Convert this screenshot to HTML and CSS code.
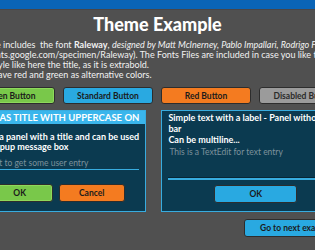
FILE: index.html
```html
<!DOCTYPE html>
<html lang="en">
<head>
    <meta charset="UTF-8">
    <meta name="viewport" content="width=device-width, initial-scale=1.0">
    <title>Theme Example</title>
    <link rel="stylesheet" href="styles.css">
</head>
<body>
    <div class="topbar"></div>

    <main class="page">
        <h1 class="title">Theme Example</h1>

        <!-- Texto de introduccion -->
        <p class="intro">
            This theme includes &nbsp;the font <b>Raleway</b>, <i>designed by Matt McInerney, Pablo Impallari, Rodrigo Fuenzalida</i><br>
            (https://fonts.google.com/specimen/Raleway). The Fonts Files are included in case you like to change<br>
            the font style like here the title, as it is extrabold.<br>
            We also&nbsp; have red and green as alternative colors.
        </p>

        <!-- Botones de ejemplo -->
        <div class="button-row">
            <button class="btn btn-green">Green Button</button>
            <button class="btn btn-blue">Standard Button</button>
            <button class="btn btn-red">Red Button</button>
            <button class="btn btn-disabled" disabled>Disabled Button</button>
        </div>

        <div class="panels">
            <!-- Panel con titulo -->
            <section class="panel">
                <header class="panel-title">Panel as title with uppercase on</header>
                <div class="panel-body">
                    <p class="panel-text">This is a panel with a title and can be used<br>as a popup message box</p>
                    <div class="text-input">TextEdit to get some user entry</div>
                    <div class="dialog-buttons">
                        <button class="btn btn-green">OK</button>
                        <button class="btn btn-red">Cancel</button>
                    </div>
                </div>
            </section>

            <!-- Panel sin titulo -->
            <section class="panel">
                <div class="panel-body">
                    <p class="panel-text loose">Simple text with a label - Panel without title<br>bar<br>Can be multiline...</p>
                    <div class="text-area">This is a TextEdit for text entry</div>
                    <div class="dialog-buttons low">
                        <button class="btn btn-blue wide">OK</button>
                    </div>
                </div>
            </section>
        </div>

        <div class="footer-row">
            <button class="btn btn-blue next">Go to next example</button>
        </div>
    </main>
</body>
</html>
```

FILE: styles.css
```css
/* General */
body {
    margin: 0;
    background: #505050;
    font-family: Lato, 'Open Sans', sans-serif;
    color: #ffffff;
    overflow: hidden;
}

.topbar {
    height: 9px;
    background: #0a64b6;
    border-bottom: 1px solid #4a4646;
}

/* Contenedor centrado, mas ancho que la ventana */
.page {
    width: 385px;
    margin-left: -35px;
}

.title {
    margin: 3px 0 0;
    font-size: 18px;
    line-height: 22px;
    font-weight: 900;
    text-align: center;
}

.intro {
    margin: 5px 0 0 -8px;
    font-size: 9px;
    line-height: 10px;
    white-space: nowrap;
    color: #f2f2f2;
}

/* Botones */
.btn {
    font-family: Lato, 'Open Sans', sans-serif;
    font-size: 8.5px;
    font-weight: 700;
    color: #1b1b1b;
    height: 17px;
    padding: 0;
    border: 1px solid #2d2d2d;
    border-radius: 3px;
    cursor: pointer;
}

.btn-green {
    background: #79c84a;
    box-shadow: inset 0 0 0 1px #8ed95c;
}

.btn-blue {
    background: #29a9e1;
}

.btn-red {
    background: #f47b20;
}

.btn-disabled {
    background: #9b9b9b;
    color: #2a2a2a;
}

.button-row {
    display: flex;
    gap: 8px;
    margin-top: 7px;
}

.button-row .btn {
    width: 90px;
}

/* Paneles */
.panels {
    display: flex;
    gap: 15px;
    margin-top: 6px;
}

.panel {
    flex: 1;
    display: flex;
    flex-direction: column;
    background: #0b3a50;
    border: 1px solid #38acdf;
    height: 100px;
}

.panel-title {
    height: 13px;
    background: #3ab6ec;
    padding: 0 6px 0 2px;
    font-size: 9.5px;
    line-height: 13px;
    font-weight: 700;
    text-transform: uppercase;
    white-space: nowrap;
}

.panel-body {
    flex: 1;
    display: flex;
    flex-direction: column;
    padding: 0 6px;
}

.panel-text {
    margin: 8px 0 0;
    font-size: 9px;
    line-height: 10px;
    font-weight: 700;
    white-space: nowrap;
}

.panel-text.loose {
    margin-top: 1px;
    line-height: 11px;
}

.text-input {
    margin-top: 5px;
    font-size: 8.5px;
    line-height: 12px;
    color: #7d929c;
    border-bottom: 1px solid #38acdf;
    white-space: nowrap;
}

.text-area {
    margin-top: 1px;
    height: 32px;
    padding: 0 1px;
    font-size: 8.5px;
    line-height: 12px;
    color: #7d929c;
    border-bottom: 2px solid #38acdf;
    box-shadow: 0 -1px 0 #072534 inset;
    white-space: nowrap;
}

.dialog-buttons {
    display: flex;
    justify-content: center;
    gap: 6px;
    margin-top: 14px;
}

.dialog-buttons.low {
    margin-top: 5px;
}

.dialog-buttons .btn {
    width: 66px;
    height: 18px;
}

.dialog-buttons .wide {
    width: 83px;
}

.footer-row {
    display: flex;
    justify-content: flex-end;
    margin-top: 7px;
}

.next {
    width: 106px;
    height: 18px;
}
```
